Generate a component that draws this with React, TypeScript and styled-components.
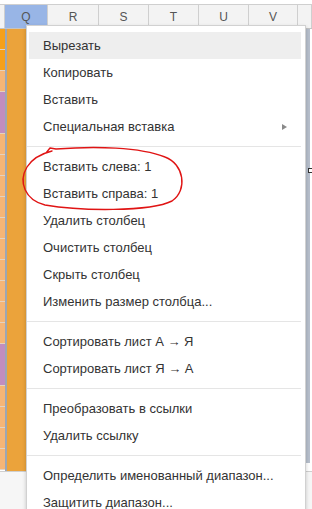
import styled, { createGlobalStyle } from 'styled-components';

const GlobalStyle = createGlobalStyle`
  html, body {
    margin: 0;
    padding: 0;
    background: #ffffff;
  }
  body {
    font-family: "Liberation Sans", Arial, sans-serif;
  }
`;

const Page = styled.div`
  position: relative;
  width: 312px;
  height: 509px;
  overflow: hidden;
  display: flex;
  flex-direction: column;
  background: #ffffff;
`;

const TopGap = styled.div`
  height: 4px;
  background: #ffffff;
  border-bottom: 1px solid #cfcfcf;
`;

const Header = styled.div`
  display: flex;
  height: 23px;
  background: #f3f3f3;
  border-bottom: 1px solid #c4c4c4;
`;

const HeadCell = styled.div<{ $w: number; $active?: boolean }>`
  width: ${(p) => p.$w}px;
  flex: none;
  box-sizing: border-box;
  border-right: 1px solid #cfcfcf;
  display: flex;
  align-items: center;
  justify-content: center;
  font-size: 12px;
  color: #555;
  background: ${(p) => (p.$active ? '#98b5e6' : 'transparent')};
`;

const Body = styled.div`
  display: flex;
  height: 442px;
  flex: none;
`;

const LeftCol = styled.div`
  width: 5px;
  display: flex;
  flex-direction: column;
`;

const LeftCell = styled.div<{ $c: string; $h: number }>`
  height: ${(p) => p.$h}px;
  flex: none;
  background: ${(p) => p.$c};
  border-bottom: 1px solid #e6d2bd;
`;

const Divider = styled.div`
  width: 2px;
  background: #9da6b3;
`;

const QCol = styled.div`
  width: 41px;
  background: #eba33b;
`;

const Grid = styled.div`
  flex: 1;
  background: #ffffff;
`;

const RightStrip = styled.div`
  position: relative;
  width: 4px;
  height: 434px;
  background: #b7bfcc;
  margin-right: 2px;
`;

const Handle = styled.div`
  position: absolute;
  left: 2px;
  top: 139px;
  width: 3px;
  height: 3px;
  background: #ffffff;
  border: 1px solid #333;
`;

const Footer = styled.div`
  flex: 1;
  background: #f6f6f6;
  border-top: 1px solid #cfcfcf;
`;

const Menu = styled.div`
  position: absolute;
  left: 26px;
  top: 25px;
  width: 280px;
  box-sizing: border-box;
  padding: 6px 0;
  background: #ffffff;
  border: 1px solid rgba(0, 0, 0, 0.18);
  box-shadow: 0 2px 4px rgba(0, 0, 0, 0.2);
  z-index: 2;
`;

const Item = styled.div<{ $hover?: boolean }>`
  height: 27px;
  margin: 0 4px 0 2px;
  padding: 0 14px;
  display: flex;
  align-items: center;
  justify-content: space-between;
  font-size: 13px;
  color: #333;
  white-space: nowrap;
  background: ${(p) => (p.$hover ? '#eeeeee' : 'transparent')};
`;

const Arrow = styled.span`
  width: 0;
  height: 0;
  border-left: 5px solid #8a8a8a;
  border-top: 3px solid transparent;
  border-bottom: 3px solid transparent;
`;

const Separator = styled.div`
  height: 1px;
  margin: 6px 4px 6px 0;
  background: #e5e5e5;
`;

const Scribble = styled.svg`
  position: absolute;
  left: 0;
  top: 0;
  width: 312px;
  height: 509px;
  pointer-events: none;
  z-index: 3;
`;

const columns = [
  { w: 5, label: '' },
  { w: 43, label: 'Q', active: true },
  { w: 51, label: 'R' },
  { w: 50, label: 'S' },
  { w: 50, label: 'T' },
  { w: 50, label: 'U' },
  { w: 49, label: 'V' },
  { w: 14, label: '' },
];

const orange = '#f6a01a';
const peach = '#f5b576';
const purple = '#c28dbf';

const leftRows: [string, number][] = [
  [orange, 20], [orange, 20], [peach, 20], [purple, 41],
  [peach, 20], [peach, 20], [peach, 20], [peach, 20], [peach, 20],
  [peach, 20], [peach, 20], [peach, 20], [peach, 20], [peach, 20],
  [purple, 41], [peach, 20], [peach, 20], [peach, 20], [peach, 20],
];

type Entry = { label: string; hover?: boolean; sub?: boolean } | 'sep';

const entries: Entry[] = [
  { label: 'Вырезать', hover: true },
  { label: 'Копировать' },
  { label: 'Вставить' },
  { label: 'Специальная вставка', sub: true },
  'sep',
  { label: 'Вставить слева: 1' },
  { label: 'Вставить справа: 1' },
  { label: 'Удалить столбец' },
  { label: 'Очистить столбец' },
  { label: 'Скрыть столбец' },
  { label: 'Изменить размер столбца...' },
  'sep',
  { label: 'Сортировать лист А → Я' },
  { label: 'Сортировать лист Я → А' },
  'sep',
  { label: 'Преобразовать в ссылки' },
  { label: 'Удалить ссылку' },
  'sep',
  { label: 'Определить именованный диапазон...' },
  { label: 'Защитить диапазон...' },
];

export default function App() {
  return (
    <>
      <GlobalStyle />
      <Page>
        <TopGap />
        <Header>
          {columns.map((c, i) => (
            <HeadCell key={i} $w={c.w} $active={c.active}>
              {c.label}
            </HeadCell>
          ))}
        </Header>
        <Body>
          <LeftCol>
            {leftRows.map(([c, h], i) => (
              <LeftCell key={i} $c={c} $h={h} />
            ))}
          </LeftCol>
          <Divider />
          <QCol />
          <Grid />
          <RightStrip>
            <Handle />
          </RightStrip>
        </Body>
        <Footer />

        <Menu>
          {entries.map((e, i) =>
            e === 'sep' ? (
              <Separator key={i} />
            ) : (
              <Item key={i} $hover={e.hover}>
                <span>{e.label}</span>
                {e.sub && <Arrow />}
              </Item>
            )
          )}
        </Menu>

        <Scribble viewBox="0 0 312 509">
          <path
            d="M 46 153 L 50 148 L 56 149 C 95 146, 140 147, 165 157 C 184 164, 188 190, 172 201 C 150 212, 80 211, 45 205 C 25 200, 18 182, 27 167 C 32 159, 40 154, 52 151"
            fill="none"
            stroke="#e01414"
            strokeWidth="1.4"
            strokeLinecap="round"
            strokeLinejoin="round"
          />
        </Scribble>
      </Page>
    </>
  );
}
